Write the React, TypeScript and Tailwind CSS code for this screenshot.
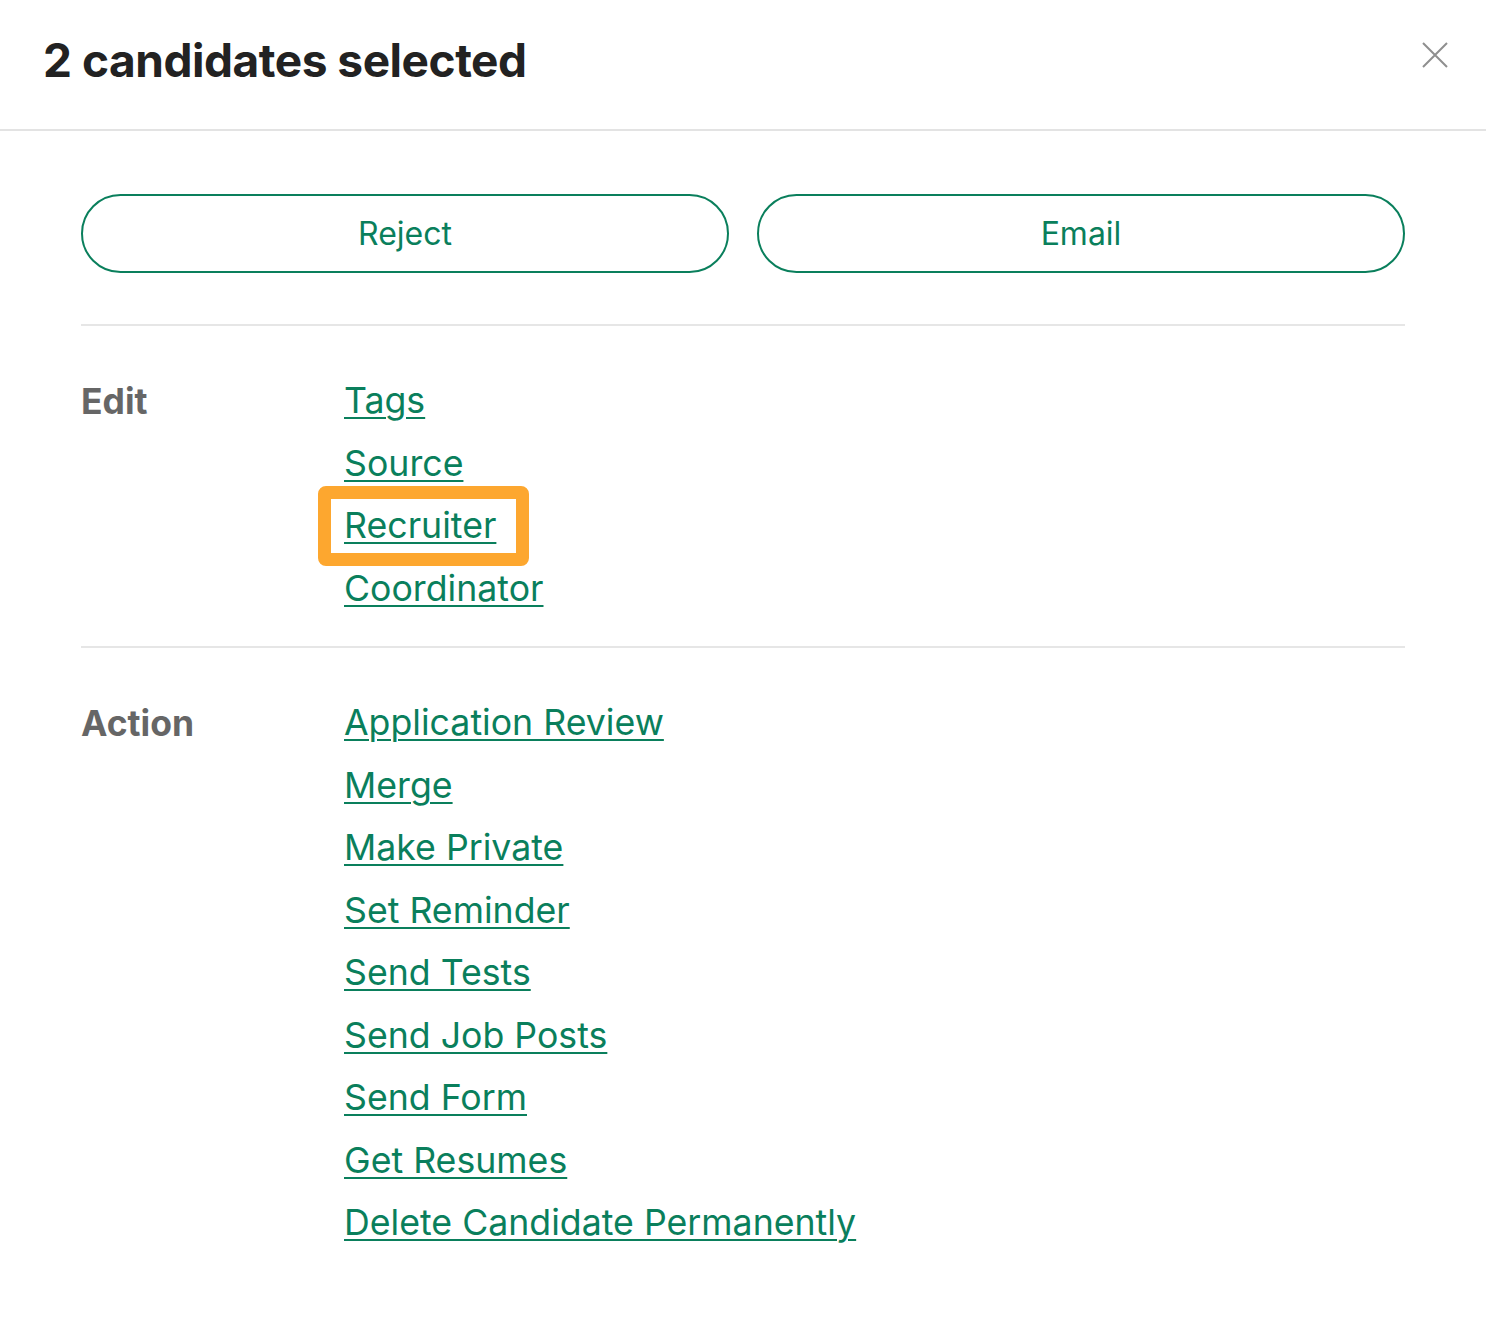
import React from 'react';

const editLinks = ['Tags', 'Source', 'Recruiter', 'Coordinator'];
const actionLinks = [
    'Application Review',
    'Merge',
    'Make Private',
    'Set Reminder',
    'Send Tests',
    'Send Job Posts',
    'Send Form',
    'Get Resumes',
    'Delete Candidate Permanently',
];

function LinkList({ links, highlight }: { links: string[]; highlight?: string }) {
    return (
        <ul className="flex flex-col">
            {links.map((link) => (
                <li key={link} className="h-[62.5px] flex items-center">
                    <span className="relative">
                        <a
                            href="#"
                            className="text-[35.7px] leading-none text-[#0a7f5c] underline decoration-2 underline-offset-[4px]"
                        >
                            {link}
                        </a>
                        {highlight === link && (
                            <span className="absolute -left-[26px] -right-[33px] -top-[22px] -bottom-[22px] border-[13px] border-[#fda72f] rounded-lg pointer-events-none" />
                        )}
                    </span>
                </li>
            ))}
        </ul>
    );
}

export default function App() {
    return (
        <div className="w-[1486px] min-h-[1320px] bg-white text-[#222]" style={{ fontFamily: 'Inter, "Noto Sans", sans-serif' }}>
            <header className="h-[131px] border-b-2 border-[#e3e3e3] flex items-center justify-between pl-[43px] pr-[36px]">
                <h1 className="text-[46px] font-bold tracking-[-0.01em] text-[#222] -mt-[8px]">2 candidates selected</h1>
                <button className="w-[30px] h-[30px] -mt-[20px] text-[#8f8f8f]" aria-label="Close">
                    <svg viewBox="0 0 30 30" width="30" height="30" fill="none" stroke="currentColor" strokeWidth="2">
                        <path d="M3 3 L27 27 M27 3 L3 27" />
                    </svg>
                </button>
            </header>

            <main className="px-[81px]">
                <div className="grid grid-cols-2 gap-[28px] pt-[63px] pb-[51px] border-b-2 border-[#e6e6e6]">
                    <button className="h-[79px] rounded-full border-2 border-[#0a7f5c] text-[32px] text-[#0a7f5c]">Reject</button>
                    <button className="h-[79px] rounded-full border-2 border-[#0a7f5c] text-[32px] text-[#0a7f5c]">Email</button>
                </div>

                <section className="flex pt-[44px] pb-[26px] border-b-2 border-[#e6e6e6]">
                    <div className="w-[263px] h-[62.5px] flex items-center text-[35.5px] font-bold text-[#666]">Edit</div>
                    <LinkList links={editLinks} highlight="Recruiter" />
                </section>

                <section className="flex pt-[44px]">
                    <div className="w-[263px] h-[62.5px] flex items-center text-[35.5px] font-bold text-[#666]">Action</div>
                    <LinkList links={actionLinks} />
                </section>
            </main>
        </div>
    );
}
